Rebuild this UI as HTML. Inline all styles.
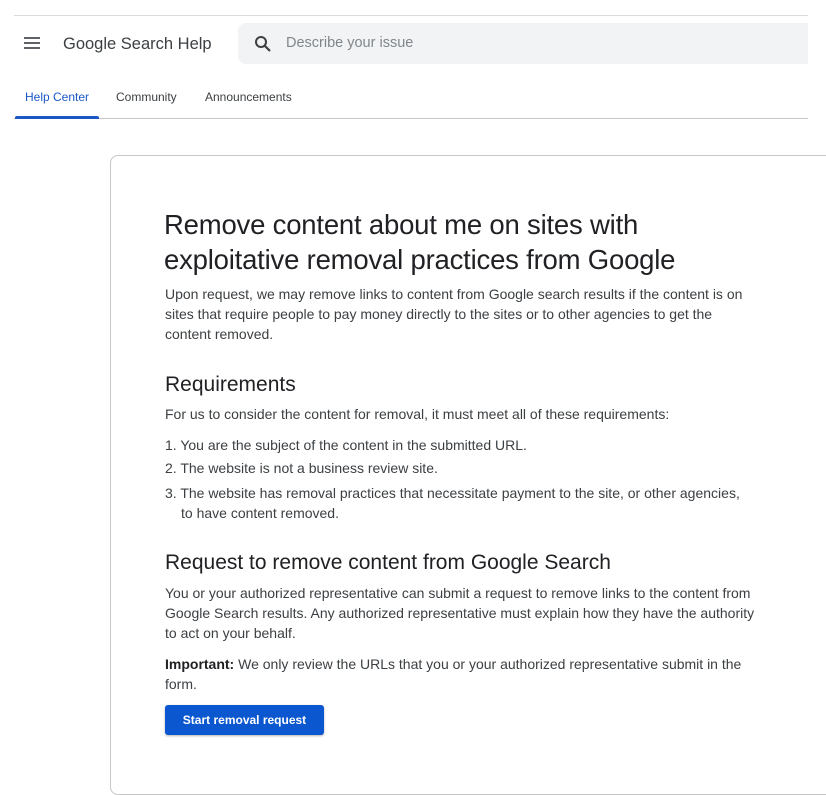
<!DOCTYPE html>
<html><head><meta charset="utf-8"><style>
*{margin:0;padding:0;box-sizing:border-box}
html,body{width:826px;height:772px;overflow:hidden;background:#fff;font-family:"Liberation Sans",Arial,sans-serif;color:#202124}
.a{position:absolute;white-space:nowrap}
.t{font-size:14px;color:#3c4043}
.h1{font-size:27.5px;color:#202124;letter-spacing:-0.2px}
.h2{font-size:21px;color:#202124}
</style></head><body>
<div class="a" style="left:14px;top:15px;width:794px;height:1px;background:#dadce0"></div>
<svg class="a" style="left:24px;top:37px" width="16" height="12"><rect y="0" width="16" height="2" fill="#5f6368"/><rect y="5" width="16" height="2" fill="#5f6368"/><rect y="10" width="16" height="2" fill="#5f6368"/></svg>
<div class="a" style="left:63px;top:35px;font-size:16.5px;color:#3c4043">Google Search Help</div>
<div class="a" style="left:238px;top:23px;width:570px;height:41px;background:#f1f3f4;border-radius:8px 0 0 8px"></div>
<svg class="a" style="left:254px;top:35px" width="18" height="18" viewBox="0 0 18 18"><circle cx="7" cy="7" r="5" fill="none" stroke="#3c4043" stroke-width="2"/><path d="M10.5 10.5L16 16" stroke="#3c4043" stroke-width="2.2"/></svg>
<div class="a" style="left:286px;top:35px;font-size:14.5px;color:#80868b">Describe your issue</div>
<div class="a" style="left:25px;top:90px;font-size:12px;color:#1a57c7">Help Center</div>
<div class="a" style="left:116px;top:90px;font-size:12px;color:#3c4043">Community</div>
<div class="a" style="left:205px;top:90px;font-size:12px;color:#3c4043">Announcements</div>
<div class="a" style="left:14px;top:118px;width:794px;height:1px;background:#c4c7c9"></div>
<div class="a" style="left:15px;top:116px;width:84px;height:3px;background:#1a57c7;border-radius:2px 2px 0 0"></div>
<div class="a" style="left:110px;top:155px;width:740px;height:640px;border:1px solid #c6c6c6;border-radius:8px"></div>
<div class="a h1" style="left:164px;top:209px">Remove content about me on sites with</div>
<div class="a h1" style="left:164px;top:244px">exploitative removal practices from Google</div>
<div class="a t" style="left:165px;top:286px">Upon request, we may remove links to content from Google search results if the content is on</div>
<div class="a t" style="left:165px;top:306px">sites that require people to pay money directly to the sites or to other agencies to get the</div>
<div class="a t" style="left:165px;top:326px">content removed.</div>
<div class="a h2" style="left:165px;top:373px">Requirements</div>
<div class="a t" style="left:165px;top:406px">For us to consider the content for removal, it must meet all of these requirements:</div>
<div class="a t" style="left:165px;top:437px">1. You are the subject of the content in the submitted URL.</div>
<div class="a t" style="left:165px;top:460px">2. The website is not a business review site.</div>
<div class="a t" style="left:165px;top:485px">3. The website has removal practices that necessitate payment to the site, or other agencies,</div>
<div class="a t" style="left:181px;top:505px">to have content removed.</div>
<div class="a h2" style="left:165px;top:551px">Request to remove content from Google Search</div>
<div class="a t" style="left:165px;top:585px">You or your authorized representative can submit a request to remove links to the content from</div>
<div class="a t" style="left:165px;top:605px">Google Search results. Any authorized representative must explain how they have the authority</div>
<div class="a t" style="left:165px;top:625px">to act on your behalf.</div>
<div class="a t" style="left:165px;top:656px"><b style="color:#202124">Important:</b> We only review the URLs that you or your authorized representative submit in the</div>
<div class="a t" style="left:165px;top:676px">form.</div>
<div class="a" style="left:165px;top:705px;width:159px;height:30px;background:#0b57d0;border-radius:3px;box-shadow:0 1px 2px rgba(0,0,0,.3);color:#fff;font-size:12px;font-weight:bold;text-align:center;line-height:30px">Start removal request</div>
</body></html>
